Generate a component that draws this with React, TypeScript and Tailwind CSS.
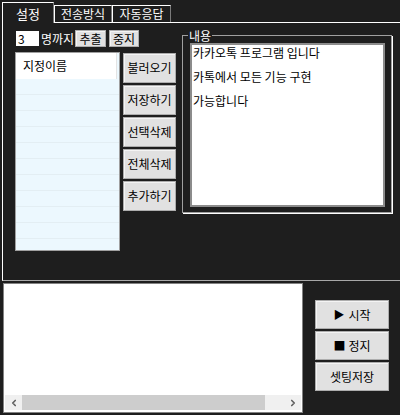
import { ChevronLeft, ChevronRight } from "lucide-react";

const font = "font-['Noto_Sans_CJK_KR','Liberation_Sans',sans-serif]";

function WinButton({
  label,
  className = "",
}: {
  label: React.ReactNode;
  className?: string;
}) {
  return (
    <div
      className={`bg-[#e1e1e1] border border-[#adadad] shadow-[inset_1px_1px_0_#f4f4f4] text-black text-[12px] leading-none flex items-center justify-center ${className}`}
    >
      {label}
    </div>
  );
}

export default function App() {
  const listRows = Array.from({ length: 11 });

  return (
    <div
      className={`w-[400px] h-[415px] bg-[#1e1e1e] overflow-hidden text-[12px] ${font}`}
    >
      {/* Tabs */}
      <div className="flex items-end h-[23px] pl-[2px] pt-[2px]">
        <div className="w-[52px] h-[21px] border-l border-t border-r border-l-white border-t-white border-r-[#7a7a7a] text-white text-[13px] leading-none flex items-center justify-center pt-[1px]">
          설정
        </div>
        <div className="flex-1 h-full flex items-end border-b border-white">
          <div className="w-[58px] h-[17px] border-l border-t border-r border-l-white border-t-white border-r-[#7a7a7a] text-white leading-none flex items-center justify-center">
            전송방식
          </div>
          <div className="w-[59px] h-[17px] border-l border-t border-r border-l-white border-t-white border-r-[#7a7a7a] text-white leading-none flex items-center justify-center">
            자동응답
          </div>
        </div>
      </div>

      {/* Tab panel */}
      <div className="ml-[2px] h-[258px] border-l border-l-white border-b border-b-[#a8a8a8] flex pl-[12px] pt-[7px]">
        {/* Left column */}
        <div className="w-[161px] flex flex-col">
          <div className="flex items-center h-[17px]">
            <div className="ml-[1px] w-[23px] h-[15px] bg-white text-black leading-[15px] pl-[2px]">
              3
            </div>
            <span className="ml-[2px] text-white leading-none">명까지</span>
            <WinButton label="추출" className="ml-[1px] w-[31px] h-[17px]" />
            <WinButton label="중지" className="ml-[3px] w-[30px] h-[17px]" />
          </div>

          <div className="flex mt-[5px] gap-[3px]">
            {/* Name list */}
            <div className="w-[105px] h-[199px] border border-[#a0a0a0] bg-[#ecf8fe] overflow-hidden">
              <div className="h-[26px] bg-white border-r border-r-[#e4e4e4] mr-[2px] flex items-center pl-[7px] text-black">
                지정이름
              </div>
              {listRows.map((_, i) => (
                <div key={i} className="h-[16px] border-b border-[#e3eef3]" />
              ))}
            </div>

            {/* Button column */}
            <div className="mt-[1px] flex flex-col gap-[2px]">
              <WinButton label="불러오기" className="w-[53px] h-[30px]" />
              <WinButton label="저장하기" className="w-[53px] h-[30px]" />
              <WinButton label="선택삭제" className="w-[53px] h-[30px]" />
              <WinButton label="전체삭제" className="w-[53px] h-[30px]" />
              <WinButton label="추가하기" className="w-[53px] h-[30px]" />
            </div>
          </div>
        </div>

        {/* Group box 내용 */}
        <div className="relative ml-[6px] mt-[5px] w-[210px] h-[178px] border border-[#a0a0a0] shadow-[1px_1px_0_#ffffff] pl-[7px] pt-[7px]">
          <span className="absolute left-[5px] top-[-7px] px-[1px] bg-[#1e1e1e] text-white leading-[13px]">
            내용
          </span>
          <div className="w-[195px] h-[164px] bg-white border-2 border-[#8c8c8c] pl-[1px] text-black">
            <div className="h-[24px] leading-[15px]">카카오톡 프로그램 입니다</div>
            <div className="h-[24px] leading-[15px]">카톡에서 모든 기능 구현</div>
            <div className="h-[24px] leading-[15px]">가능합니다</div>
          </div>
        </div>
      </div>

      {/* Bottom area */}
      <div className="flex mt-[2px]">
        <div className="ml-[3px] w-[300px] h-[130px] bg-white border border-[#828282] flex flex-col justify-end">
          <div className="h-[15px] mx-[1px] mb-[2px] bg-[#f0f0f0] flex">
            <div className="w-[17px] flex items-center justify-center">
              <ChevronLeft className="w-[10px] h-[10px] text-[#606060]" strokeWidth={4} />
            </div>
            <div className="w-[243px] bg-[#cdcdcd]" />
            <div className="flex-1" />
            <div className="w-[17px] flex items-center justify-center">
              <ChevronRight className="w-[10px] h-[10px] text-[#606060]" strokeWidth={4} />
            </div>
          </div>
        </div>

        <div className="ml-[12px] mt-[17px] flex flex-col gap-[2px]">
          <WinButton
            label={
              <span className="flex items-center gap-[4px]">
                <span className="text-[11px]">▶</span>시작
              </span>
            }
            className="w-[74px] h-[29px]"
          />
          <WinButton
            label={
              <span className="flex items-center gap-[3px]">
                <span className="text-[12px]">■</span>정지
              </span>
            }
            className="w-[74px] h-[29px]"
          />
          <WinButton label="셋팅저장" className="w-[74px] h-[29px]" />
        </div>
      </div>
    </div>
  );
}
